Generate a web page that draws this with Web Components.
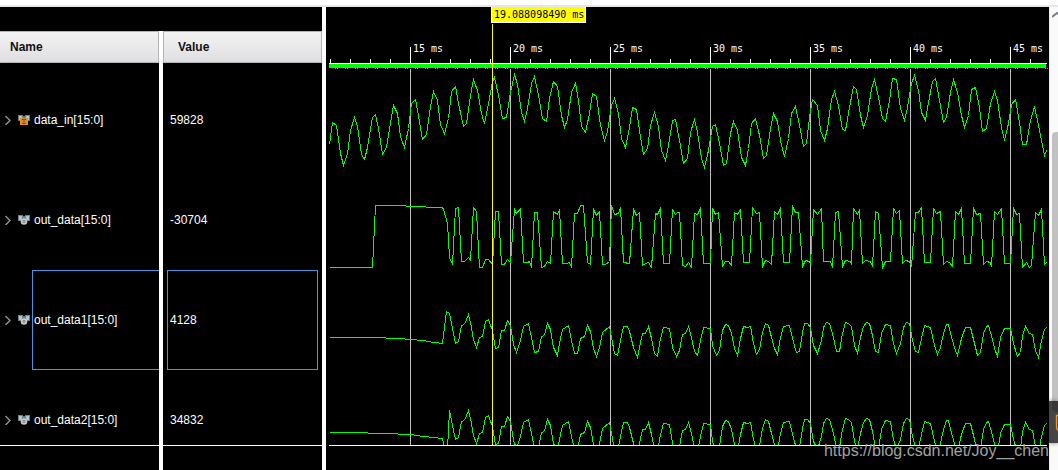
<!DOCTYPE html>
<html lang="en">
<head>
<meta charset="utf-8">
<title>Waveform viewer</title>
<style>
  body { margin: 0; background: #000; font: 12px/16px "Liberation Sans", Arial, sans-serif; }
</style>
</head>
<body>
<wave-viewer></wave-viewer>

<script>
const define = (name, markup, setup) => {
  const template = document.createElement("template");
  template.innerHTML = markup;
  customElements.define(name, class extends HTMLElement {
    constructor() {
      super();
      this.attachShadow({ mode: "open" }).append(template.content.cloneNode(true));
    }
    connectedCallback() { if (setup) setup(this, this.shadowRoot); }
  });
};

/* Bus icon: plain for internal signals, with an orange port for inputs */
define("bus-icon", `
<style>
  :host { display: block; width: 12px; height: 12px; flex: none; }
  svg { display: block; }
  .port, :host([kind="input"]) .node { display: none; }
  :host([kind="input"]) .port { display: inline; }
</style>
<svg width="12" height="12" viewBox="0 0 12 12" aria-hidden="true">
  <path d="M0 1h5v1h2V1h5v6H9L6 9 3 7H0z" fill="#77797b"/>
  <path d="M1 2h3v2L3 6H1zM8 2h3v4H9L8 4z" fill="#9bd0e2"/>
  <g class="node"><circle cx="6" cy="7.5" r="3.3" fill="#c9c9c9"/><circle cx="6" cy="7.5" r="1.4" fill="#77797b"/><circle cx="6" cy="7.5" r=".6" fill="#eee"/></g>
  <g class="port"><path d="M2 4h8v7H2z" fill="#dc8d2b"/><path d="M4 5h4v1H6.500v3H8v1H4V9h1.500V6H4z" fill="#8a5415"/></g>
</svg>`);

define("signal-name", `
<style>
  :host { display: flex; height: 16px; color: #fff; align-items: center; }
  button { width: 16px; height: 16px; margin-right: 2px; padding: 0 0 0 4px; border: 0; background: none; flex: none; }
  button svg { display: block; }
  bus-icon { margin-right: 4px; }
</style>
<button type="button" aria-label="Expand signal"><svg width="8" height="10" viewBox="0 0 8 10"><path d="M1.500 1L6 5.500 1.500 10" fill="none" stroke="#999" stroke-width="1.300"/></svg></button>
<bus-icon></bus-icon><slot></slot>`, (host, root) => {
  root.querySelector("bus-icon").setAttribute("kind", host.getAttribute("kind") || "");
});

define("signal-table", `
<style>
  :host { display: block; box-sizing: border-box; padding-top: 24px; border-right: 4px solid #fff; background: #000; color: #fff; }
  table { width: 322px; table-layout: fixed; border-spacing: 0; }
  th, td { padding: 0; text-align: left; vertical-align: top; }
  tr > :first-child { width: 159px; border-right: 4px solid #fff; }
  .head { box-sizing: border-box; height: 32px; padding: 7px 10px; border: 1px solid #b4b4b4; border-left-width: 0; background: linear-gradient(#f3f3f3, #dfdfe3); color: #111; font-weight: bold; }
  .value.head { padding-left: 14px; border-left-width: 1px; }
  .cell { position: relative; box-sizing: border-box; height: 100px; padding-top: 42px; }
  td .value { padding-left: 7px; }
  tr.first td { padding-top: 7px; }
  tr.last .cell { height: 76px; border-bottom: 1px solid #fff; }
  tr.tail td { height: 24px; }
  tr.selected .cell::before { content: ""; position: absolute; inset: 0 0 0 32px; border: 1px solid #4596dc; border-right: 0; }
  tr.selected .value::before { inset: 0 4px; border-right: 1px solid #4596dc; }
</style>
<table>
  <thead><tr><th scope="col"><div class="head">Name</div></th><th scope="col"><div class="value head">Value</div></th></tr></thead>
  <tbody>
    <tr class="first"><td><div class="cell"><signal-name kind="input">data_in[15:0]</signal-name></div></td><td><div class="cell value">59828</div></td></tr>
    <tr><td><div class="cell"><signal-name>out_data[15:0]</signal-name></div></td><td><div class="cell value">-30704</div></td></tr>
    <tr class="selected"><td><div class="cell"><signal-name>out_data1[15:0]</signal-name></div></td><td><div class="cell value">4128</div></td></tr>
    <tr class="last"><td><div class="cell"><signal-name>out_data2[15:0]</signal-name></div></td><td><div class="cell value">34832</div></td></tr>
    <tr class="tail"><td></td><td></td></tr>
  </tbody>
</table>`);

define("time-ruler", `
<style>
  :host { display: grid; grid-template-rows: 32px 24px; align-content: start; font: 10px/12px "DejaVu Sans Mono", monospace; color: #fff; white-space: nowrap; }
  .cursor { display: grid; grid-template-columns: minmax(0, 165fr) minmax(0, 558fr); align-items: start; justify-items: start; }
  .cursor output { grid-column: 2; padding: 2px 1px 1px 2px; border: solid #fff; border-width: 0 1px 1px; background: #ff0; color: #000; }
  .marks { display: grid; grid-template-columns: minmax(0, 84fr) repeat(6, minmax(0, 100fr)) minmax(0, 39fr); padding-top: 4px; }
  .marks span { padding-left: 3px; }
  .marks span:first-child { grid-column: 2; }
</style>
<div class="cursor"><output>19.088098490 ms</output></div>
<div class="marks"><span>15 ms</span><span>20 ms</span><span>25 ms</span><span>30 ms</span><span>35 ms</span><span>40 ms</span><span>45 ms</span></div>`);

/* Sampled traces, "x,y" pairs in plot units */
const DATA_IN = "329,144 332,122 336,125 340,153 343,165 347,153 350,130 354,117 357,126 361,154 364,159 367,147 372,117 375,114 378,128 382,154 386,147 390,123 393,105 397,113 400,136 404,147 408,128 411,103 415,99 418,115 422,139 426,134 430,106 433,91 437,100 440,124 444,133 448,118 451,91 455,86 458,103 463,126 466,123 470,95 473,79 477,90 481,113 484,123 488,103 492,81 494,77 498,95 502,118 506,117 510,92 514,74 517,84 521,112 524,121 527,108 531,83 534,76 538,95 542,118 546,121 549,98 553,81 557,86 561,115 564,127 567,119 571,92 575,83 578,100 581,126 585,132 589,113 592,93 596,96 600,125 604,140 607,131 611,105 614,98 618,113 621,138 625,147 629,127 632,107 636,109 640,137 643,154 647,148 650,125 654,112 658,126 661,150 665,160 668,145 672,120 675,119 679,140 683,163 687,158 690,132 694,119 697,132 701,158 704,167 708,150 712,126 715,124 719,143 723,165 726,163 730,133 733,121 737,130 741,157 745,165 748,148 751,123 755,118 759,135 763,158 766,155 770,128 773,113 777,121 781,145 784,156 788,138 791,113 795,106 799,125 803,146 806,143 809,117 812,99 817,105 820,130 824,140 827,128 831,99 834,91 838,105 842,129 845,130 849,107 853,86 856,89 860,115 863,127 867,115 871,88 874,79 878,97 882,118 885,121 889,100 892,78 896,79 900,108 904,120 907,107 911,83 914,75 918,90 921,112 925,120 928,102 932,81 935,78 939,100 943,122 946,117 950,92 953,79 957,92 961,115 964,127 968,115 971,89 975,87 979,107 982,131 986,128 990,103 994,91 997,100 1001,127 1004,140 1008,123 1011,104 1015,99 1019,122 1022,144 1026,144 1030,120 1034,106 1037,120 1041,140 1044,155 1046,150";
const OUT_DATA = "329,267 372,267 375,205 405,205 406,206 425,206 426,207 442,207 443,209 447,223 449,257 452,264 455,208 458,207 461,261 464,261 468,257 470,260 473,207 476,211 479,267 482,267 485,259 488,259 492,264 495,211 498,211 501,264 504,264 507,259 510,262 514,209 516,213 520,208 523,262 527,262 529,261 531,267 534,212 537,212 541,267 544,266 547,261 550,263 553,211 557,214 559,209 562,263 566,263 569,262 571,267 574,213 577,213 580,205 583,205 587,262 590,264 593,209 596,215 599,211 602,264 605,264 609,261 611,205 614,214 618,213 620,207 623,262 629,263 633,209 636,215 639,212 642,265 643,264 648,262 651,267 655,213 657,214 660,208 663,263 669,263 672,209 675,214 677,212 679,212 682,265 685,266 688,262 691,267 694,213 697,214 700,208 703,263 710,263 712,208 715,214 718,212 722,266 725,261 728,261 731,265 734,212 737,214 740,209 743,262 749,262 752,207 756,213 759,212 762,266 765,260 768,261 771,264 774,211 777,214 780,208 783,262 789,262 792,206 795,212 798,212 802,266 805,260 809,261 810,263 813,209 817,214 821,208 823,261 830,261 832,267 835,212 838,211 842,266 845,260 850,261 851,264 853,208 857,214 859,209 862,263 865,260 870,261 872,266 875,211 878,213 882,267 885,261 890,261 893,208 896,213 899,210 902,263 905,260 909,261 911,266 915,212 918,212 921,207 924,262 930,262 933,208 936,213 940,211 943,264 946,261 949,262 952,266 955,211 958,214 961,208 964,263 970,263 973,208 976,214 980,213 983,264 986,261 990,262 991,266 994,211 997,214 1001,208 1004,263 1010,263 1013,208 1016,214 1019,213 1022,267 1026,262 1029,267 1031,265 1035,212 1038,215 1041,209 1044,264 1046,262";
const FILTER_START = "329,337 385,337 386,338 404,338 405,339 416,339 417,340 425,340 426,341 434,342 442,343 446,311 449,313 452,328 ";
const FILTERED = "455,343 458,341 461,325 464,324 468,314 470,322 473,339 476,347 479,337 482,336 485,321 488,319 492,330 495,348 498,347 501,330 504,330 507,320 510,325 513,344 516,352 520,340 523,326 528,323 531,337 534,352 538,351 541,336 544,335 547,323 550,329 553,347 557,355 559,343 562,329 568,325 571,340 574,353 577,353 580,338 584,336 587,325 590,331 593,348 596,356 599,347 602,332 609,326 611,337 614,353 617,355 620,340 623,326 627,326 629,331 633,347 637,357 639,347 642,333 645,333 648,326 651,338 654,353 657,356 660,338 663,327 669,328 672,347 676,356 679,350 682,334 685,333 688,326 691,337 694,351 697,355 700,340 703,327 710,328 712,345 716,355 719,350 722,330 725,324 728,325 731,333 734,348 737,355 740,338 743,326 747,327 750,326 753,343 756,354 759,349 762,332 765,323 768,325 771,337 774,348 777,354 780,337 783,326 789,325 793,342 796,352 799,351 802,332 804,323 807,323 810,327 813,345 817,353 821,340 823,327 826,322 829,323 833,337 836,351 839,351 842,333 845,322 848,323 851,326 854,345 857,353 860,337 863,326 866,322 869,323 872,335 875,351 878,352 881,333 885,324 890,325 893,343 896,353 900,343 903,327 906,322 909,323 912,340 915,351 918,352 921,338 924,325 930,327 934,345 937,354 940,347 943,333 946,324 948,324 951,337 955,350 957,355 961,338 965,327 970,327 974,343 977,355 980,352 983,333 986,326 988,325 991,335 994,348 997,356 1000,337 1004,328 1010,328 1013,343 1017,356 1020,352 1022,335 1025,326 1029,333 1032,334 1035,350 1038,357 1041,340 1044,329 1046,327";
const SECOND_START = "329,432 367,432 368,433 397,433 398,434 413,434 414,435 424,436 432,437 442,438 444,449 447,449 449,410 452,425 ";
const SECOND = FILTERED.split(" ").map(p => {
  const [x, y] = p.split(",").map(Number);
  return x + "," + (y + 96);
}).join(" ");

define("wave-plot", `
<style>
  :host { display: grid; position: relative; overflow: hidden; background: #000; }
  svg, time-ruler { grid-area: 1 / 1; }
  svg { display: block; width: 100%; height: 463px; }
  a { position: absolute; right: 0; bottom: 10px; font-size: 16px; line-height: 18px; color: #a2a2a2; text-decoration: none; }
</style>
<svg viewBox="326 7 723 463" preserveAspectRatio="none" shape-rendering="crispEdges" role="img" aria-label="Signal waveforms">
  <defs><clipPath id="lanes"><rect x="326" y="69" width="723" height="376"/></clipPath></defs>
  <g class="grid" fill="#c0c0c0"></g>
  <g class="ticks" fill="#fff"><rect x="329" y="63" width="718" height="1"/></g>
  <g class="activity" fill="#0f0"><rect x="329" y="64" width="717" height="4"/></g>
  <g class="traces" fill="none" stroke="#0f0" clip-path="url(#lanes)"></g>
  <rect x="492" y="24" width="1" height="421" fill="#ff0"/>
  <rect x="329" y="445" width="718" height="1" fill="#fff"/>
</svg>
<time-ruler></time-ruler>
<a href="https://blog.csdn.net/Joy__chen">https://blog.csdn.net/Joy__chen</a>`, (host, root) => {
  const add = (parent, tag, attrs) => {
    const el = document.createElementNS("http://www.w3.org/2000/svg", tag);
    for (const key in attrs) el.setAttribute(key, attrs[key]);
    root.querySelector(parent).append(el);
  };
  for (let x = 330; x < 1047; x += 20) {
    const major = (x - 410) % 100 === 0;
    add(".ticks", "rect", { x, y: major ? 47 : 59, width: 1, height: major ? 16 : 4 });
    if (major) add(".grid", "rect", { x, y: 69, width: 1, height: 376 });
  }
  for (let x = 335; x < 1046; x += 10) {
    add(".activity", "rect", { x, y: 68, width: 1, height: 1 });
    add(".activity", "rect", { x: x + 2, y: 68, width: 1, height: 1 });
  }
  for (const points of [DATA_IN, OUT_DATA, FILTER_START + FILTERED, SECOND_START + SECOND])
    add(".traces", "polyline", { points, transform: "translate(.5 .5)", "vector-effect": "non-scaling-stroke" });
});

define("scroll-rail", `
<style>
  :host { display: flex; flex-direction: column; position: relative; overflow: hidden; box-sizing: border-box; padding-left: 3px; background: linear-gradient(90deg, #e9e9ec 1px, #fafafa 1px); }
  .up { width: 12px; height: 18px; margin-bottom: 107px; padding: 0; border: 0; background: none; }
  .up svg { display: block; }
  .thumb { width: 12px; height: 276px; border-radius: 4px; background: #c1c1c1; }
  .dock { position: absolute; left: 0; top: 394px; width: 9px; height: 42px; background: #454545; box-shadow: 0 0 4px #777; }
  .dock svg { display: block; }
</style>
<button class="up" type="button" aria-label="Scroll up"><svg width="12" height="18"><path d="M0 10l5-4 5 4" fill="none" stroke="#7b7f83" stroke-width="2"/></svg></button>
<div class="thumb"></div>
<div class="dock"><svg width="9" height="42" aria-hidden="true"><path d="M3 0h6v11H6L3 8z" fill="#383838"/><path d="M12 14.500H7.500v13l2 2" fill="none" stroke="#e8963c" stroke-width="1.300"/></svg></div>`);

define("wave-viewer", `
<style>
  :host { display: grid; grid-template-columns: 326px minmax(0, 1fr) 9px; min-height: 100vh; box-sizing: border-box; border-top: 5px solid #fff; background: #000; }
  .edge { grid-column: 1 / -1; height: 2px; background: #e5e6e9; }
  :host { grid-template-rows: 2px 1fr; }
</style>
<div class="edge"></div>
<signal-table></signal-table><wave-plot></wave-plot><scroll-rail></scroll-rail>`);
</script>
</body>
</html>
